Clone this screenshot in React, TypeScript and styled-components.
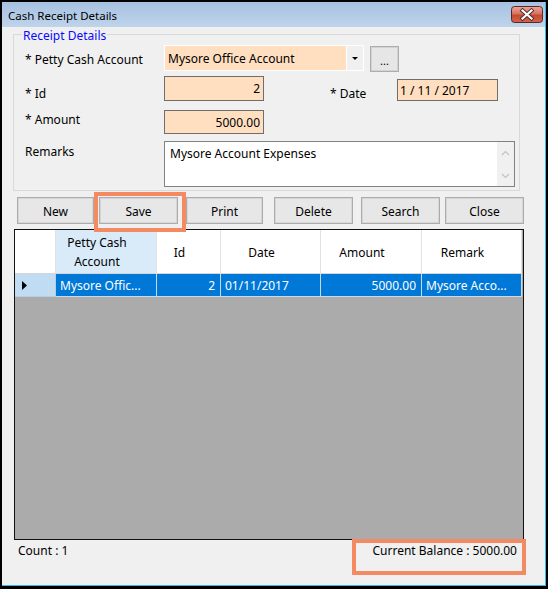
import React from 'react';
import styled, { createGlobalStyle } from 'styled-components';

const Global = createGlobalStyle`
  html, body { margin: 0; padding: 0; background: #000; }
  body { font-family: "Noto Sans", "Segoe UI", sans-serif; font-size: 12px; color: #000; }
  *, *::before, *::after { box-sizing: border-box; }
`;

const Screen = styled.div`
  width: 548px;
  height: 589px;
  background: #000;
  padding: 2px 2px 3px 2px;
  display: flex;
`;

const Window = styled.div`
  flex: 1;
  display: flex;
  flex-direction: column;
  background: #f0f0f0;
  border-right: 1px solid #3cb6e8;
  border-bottom: 1px solid #3cb6e8;
`;

const TitleBar = styled.div`
  height: 25px;
  display: flex;
  align-items: center;
  justify-content: space-between;
  padding: 0 2px 0 6px;
  background: linear-gradient(#a6c1e1, #bfd4eb);
`;

const TitleText = styled.span`
  font-size: 11.5px;
  padding-top: 2px;
  color: #000;
`;

const CloseBtn = styled.div`
  width: 32px;
  height: 17px;
  display: flex;
`;

const Body = styled.div`
  flex: 1;
  display: flex;
  flex-direction: column;
`;

const GroupBox = styled.div`
  position: relative;
  margin: 7px 0 0 11px;
  width: 507px;
  height: 157px;
  border: 1px solid #d9d9d9;
  padding: 10px 0 0 11px;
  display: flex;
  flex-direction: column;
`;

const Legend = styled.span`
  position: absolute;
  top: -7px;
  left: 8px;
  padding: 0 1px;
  line-height: 16px;
  background: #f0f0f0;
  color: #0a0aff;
  font-size: 12px;
`;

const FormRow = styled.div<{ $mt?: number }>`
  display: flex;
  align-items: flex-start;
  margin-top: ${(p) => p.$mt ?? 0}px;
`;

const Label = styled.span<{ $pt: number; $w?: number; $ml?: number }>`
  width: ${(p) => p.$w ?? 139}px;
  margin-left: ${(p) => p.$ml ?? 0}px;
  padding-top: ${(p) => p.$pt}px;
  line-height: 16px;
  white-space: nowrap;
`;

const Combo = styled.div`
  width: 200px;
  height: 26px;
  display: flex;
  border: 1px solid #fff;
`;

const ComboText = styled.div`
  flex: 1;
  background: #ffdfc0;
  padding-left: 3px;
  display: flex;
  align-items: center;
`;

const ComboArrow = styled.div`
  width: 17px;
  border-left: 1px solid #fff;
  background: #f0f0f0;
  display: flex;
  align-items: center;
  justify-content: center;
  &::before {
    content: '';
    border-left: 3px solid transparent;
    border-right: 3px solid transparent;
    border-top: 3px solid #000;
  }
`;

const DotsButton = styled.div`
  margin: 1px 0 0 6px;
  width: 29px;
  height: 26px;
  border: 1px solid #adadad;
  box-shadow: inset 0 0 0 1px #d2d2d2;
  background: #e6e6e6;
  display: flex;
  align-items: flex-end;
  justify-content: center;
  padding-bottom: 5px;
  font-size: 11px;
  line-height: 11px;
`;

const TextBox = styled.div<{ $w: number; $h: number; $align?: 'left' | 'right'; $mt?: number }>`
  width: ${(p) => p.$w}px;
  height: ${(p) => p.$h}px;
  margin-top: ${(p) => p.$mt ?? 0}px;
  border: 1px solid #6e6e6e;
  background: #ffdfc0;
  display: flex;
  align-items: center;
  justify-content: ${(p) => (p.$align === 'left' ? 'flex-start' : 'flex-end')};
  padding: 0 3px 0 2px;
  white-space: nowrap;
`;

const RemarksBox = styled.div`
  width: 351px;
  height: 46px;
  border: 1px solid #828282;
  background: #fff;
  display: flex;
`;

const RemarksText = styled.div`
  flex: 1;
  padding: 4px 5px;
  line-height: 16px;
`;

const ScrollBar = styled.div`
  width: 17px;
  background: #f0f0f0;
  display: flex;
  flex-direction: column;
  justify-content: space-between;
  align-items: center;
  padding: 8px 0 7px;
`;

const ButtonRow = styled.div`
  display: flex;
  margin-top: 6px;
  height: 27px;
`;

const Button = styled.div<{ $ml: number; $w: number; $marked?: boolean }>`
  position: relative;
  margin-left: ${(p) => p.$ml}px;
  width: ${(p) => p.$w}px;
  height: 27px;
  border: 1px solid #acacac;
  box-shadow: inset 0 0 0 1px #d6d6d6;
  background: #e7e7e7;
  display: flex;
  align-items: center;
  justify-content: center;
  padding-top: 1px;
  ${(p) =>
    p.$marked &&
    `
    &::after {
      content: '';
      position: absolute;
      left: -6px;
      top: -6px;
      width: 92px;
      height: 40px;
      border: 4px solid #f38a62;
      pointer-events: none;
    }
  `}
`;

const Grid = styled.div`
  margin: 5px 0 0 12px;
  width: 510px;
  height: 311px;
  border: 1px solid #111;
  background: #ababab;
  display: flex;
  flex-direction: column;
`;

const GridRow = styled.div<{ $h: number }>`
  display: flex;
  height: ${(p) => p.$h}px;
`;

const HeaderCell = styled.div<{ $w: number; $active?: boolean }>`
  width: ${(p) => p.$w}px;
  height: 100%;
  background: ${(p) => (p.$active ? '#d9eaf9' : '#fff')};
  border-right: 1px solid #e2e2e2;
  border-bottom: 1px solid #d6d6d6;
  display: flex;
  align-items: center;
  justify-content: center;
  text-align: center;
  padding-right: 18px;
  padding-top: 1px;
  line-height: 19px;
`;

const CornerCell = styled(HeaderCell)`
  padding-right: 0;
`;

const RowHeaderCell = styled.div`
  width: 41px;
  height: 100%;
  background: #c0dcf3;
  border-right: 1px solid #b9cde0;
  border-bottom: 1px solid #b9cde0;
  display: flex;
  align-items: center;
  padding-left: 7px;
`;

const DataCell = styled.div<{ $w: number; $align?: 'left' | 'right' }>`
  width: ${(p) => p.$w}px;
  height: 100%;
  background: #0078d7;
  color: #fff;
  border-right: 1px solid #c9d9ea;
  border-bottom: 1px solid #c9d9ea;
  display: flex;
  align-items: center;
  justify-content: ${(p) => (p.$align === 'right' ? 'flex-end' : 'flex-start')};
  padding: 1px 5px 0 4px;
  white-space: nowrap;
  overflow: hidden;
`;

const Footer = styled.div`
  display: flex;
  justify-content: space-between;
  align-items: flex-start;
  padding: 0 19px 0 16px;
`;

const FooterText = styled.span`
  margin-top: 3px;
  line-height: 16px;
`;

const BalanceBox = styled.div`
  margin-top: -1px;
  width: 174px;
  height: 36px;
  border: 4px solid #f38a62;
  display: flex;
  justify-content: flex-end;
  padding-right: 5px;
  line-height: 16px;
`;

const CloseIcon = () => (
  <svg width="32" height="17" viewBox="0 0 32 17">
    <defs>
      <linearGradient id="cg" x1="0" y1="0" x2="0" y2="1">
        <stop offset="0" stopColor="#e9a99c" />
        <stop offset="0.45" stopColor="#d7735f" />
        <stop offset="0.55" stopColor="#c64a35" />
        <stop offset="1" stopColor="#d0664c" />
      </linearGradient>
    </defs>
    <rect x="0.5" y="0.5" width="31" height="16" rx="3" fill="url(#cg)" stroke="#5e2621" />
    <path d="M11.5 4.5 L20.5 12.5 M20.5 4.5 L11.5 12.5" stroke="#4a2a2a" strokeWidth="4" strokeLinecap="square" />
    <path d="M11.5 4.5 L20.5 12.5 M20.5 4.5 L11.5 12.5" stroke="#fff" strokeWidth="2.2" strokeLinecap="square" />
  </svg>
);

const Chevron = ({ up }: { up?: boolean }) => (
  <svg width="9" height="6" viewBox="0 0 9 6">
    <path
      d={up ? 'M1 5 L4.5 1.5 L8 5' : 'M1 1 L4.5 4.5 L8 1'}
      fill="none"
      stroke="#c2c2c2"
      strokeWidth="1.2"
    />
  </svg>
);

const RowArrow = () => (
  <svg width="5" height="9" viewBox="0 0 5 9">
    <path d="M0 0 L5 4.5 L0 9 Z" fill="#000" />
  </svg>
);

export default function App() {
  return (
    <>
      <Global />
      <Screen>
        <Window>
          <TitleBar>
            <TitleText>Cash Receipt Details</TitleText>
            <CloseBtn>
              <CloseIcon />
            </CloseBtn>
          </TitleBar>
          <Body>
            <GroupBox>
              <Legend>Receipt Details</Legend>
              <FormRow>
                <Label $pt={7}>* Petty Cash Account</Label>
                <Combo>
                  <ComboText>Mysore Office Account</ComboText>
                  <ComboArrow />
                </Combo>
                <DotsButton>...</DotsButton>
              </FormRow>
              <FormRow $mt={4}>
                <Label $pt={10}>* Id</Label>
                <TextBox $w={100} $h={25}>2</TextBox>
                <Label $pt={10} $w={67} $ml={66}>* Date</Label>
                <TextBox $w={101} $h={22} $mt={3} $align="left">1 / 11 / 2017</TextBox>
              </FormRow>
              <FormRow $mt={8}>
                <Label $pt={2}>* Amount</Label>
                <TextBox $w={100} $h={24}>5000.00</TextBox>
              </FormRow>
              <FormRow $mt={7}>
                <Label $pt={3}>Remarks</Label>
                <RemarksBox>
                  <RemarksText>Mysore Account Expenses</RemarksText>
                  <ScrollBar>
                    <Chevron up />
                    <Chevron />
                  </ScrollBar>
                </RemarksBox>
              </FormRow>
            </GroupBox>
            <ButtonRow>
              <Button $ml={15} $w={77}>New</Button>
              <Button $ml={5} $w={79} $marked>Save</Button>
              <Button $ml={8} $w={77}>Print</Button>
              <Button $ml={11} $w={79}>Delete</Button>
              <Button $ml={8} $w={79}>Search</Button>
              <Button $ml={5} $w={79}>Close</Button>
            </ButtonRow>
            <Grid>
              <GridRow $h={44}>
                <CornerCell $w={41} />
                <HeaderCell $w={101} $active>
                  Petty Cash
                  <br />
                  Account
                </HeaderCell>
                <HeaderCell $w={64}>Id</HeaderCell>
                <HeaderCell $w={100}>Date</HeaderCell>
                <HeaderCell $w={101}>Amount</HeaderCell>
                <HeaderCell $w={100}>Remark</HeaderCell>
              </GridRow>
              <GridRow $h={23}>
                <RowHeaderCell>
                  <RowArrow />
                </RowHeaderCell>
                <DataCell $w={101}>Mysore Offic...</DataCell>
                <DataCell $w={64} $align="right">2</DataCell>
                <DataCell $w={100}>01/11/2017</DataCell>
                <DataCell $w={101} $align="right">5000.00</DataCell>
                <DataCell $w={100}>Mysore Acco...</DataCell>
              </GridRow>
            </Grid>
            <Footer>
              <FooterText>Count : 1</FooterText>
              <BalanceBox>Current Balance : 5000.00</BalanceBox>
            </Footer>
          </Body>
        </Window>
      </Screen>
    </>
  );
}
